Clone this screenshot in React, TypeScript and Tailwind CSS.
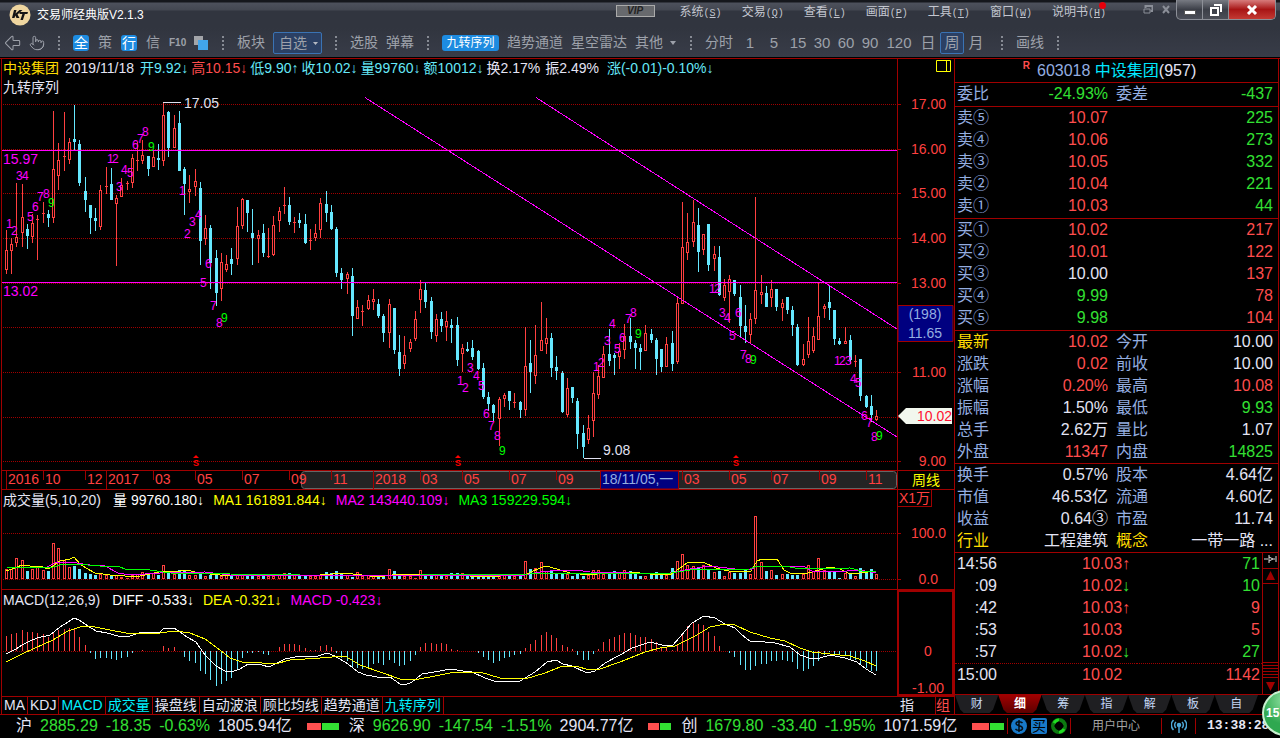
import { ArrowBigLeft, Pointer } from "lucide-react";

// high, body top, body bottom, low, up(1) / down(0) - y values in chart units
const candles = [
    [230,250,270,274,1],[238,244,251,274,1],[183,237,243,247,1],[184,217,233,247,1],[224,229,236,249,0],[214,223,237,243,1],
    [215,219,219,260,1],[202,213,213,223,1],[210,214,218,227,0],[111,169,218,223,1],[143,160,176,190,1],[112,156,156,171,1],
    [138,142,160,164,1],[105,139,142,150,0],[140,144,183,186,0],[177,191,200,212,0],[205,205,218,234,0],[208,218,221,231,0],
    [185,190,227,230,1],[167,186,186,194,1],[168,184,200,200,0],[195,198,204,266,1],[178,185,197,197,1],[181,183,183,190,1],
    [154,158,183,188,1],[142,160,160,171,1],[140,155,161,164,1],[156,156,169,176,0],[150,157,167,167,1],[144,158,160,170,0],
    [102,115,161,166,1],[111,112,148,157,0],[115,128,148,148,1],[111,123,171,171,0],[167,169,184,215,0],[175,189,192,203,1],
    [169,181,187,196,1],[182,188,241,265,0],[215,228,239,245,1],[225,228,263,289,0],[250,258,293,306,0],[253,262,289,301,1],
    [255,264,270,272,1],[248,259,264,275,0],[207,226,259,265,1],[198,199,226,229,1],[200,200,213,232,0],[209,233,238,265,0],
    [230,235,239,263,1],[224,233,253,257,0],[228,256,256,258,1],[216,225,255,256,1],[207,211,221,232,1],[187,205,205,214,1],
    [197,205,222,225,0],[217,222,222,233,1],[213,220,223,228,0],[214,224,243,244,0],[229,240,240,250,1],[224,233,238,241,1],
    [198,203,230,238,1],[191,204,213,222,0],[205,212,229,230,0],[227,229,273,277,0],[268,273,280,289,0],[272,274,279,294,1],
    [268,276,316,336,0],[300,307,319,319,1],[305,311,311,326,1],[295,300,309,310,1],[289,299,302,310,1],[299,304,316,318,0],
    [314,316,333,342,0],[299,304,333,348,1],[308,308,350,354,0],[335,352,369,376,0],[336,355,364,369,1],[339,342,349,352,1],
    [311,319,339,341,1],[280,289,300,313,1],[283,290,302,308,0],[297,301,332,339,0],[314,319,336,342,1],[312,319,326,332,0],
    [311,321,327,341,1],[319,325,328,343,0],[317,325,360,366,0],[344,348,354,372,1],[342,349,351,352,0],[340,348,357,360,0],
    [350,351,369,370,0],[363,368,397,399,0],[392,397,404,411,0],[404,405,413,421,0],[397,399,419,446,1],[393,395,399,407,1],
    [391,391,401,410,0],[393,402,402,408,1],[401,402,410,418,0],[327,366,410,416,1],[340,363,372,393,0],[325,355,376,384,1],
    [302,340,351,351,1],[318,338,344,354,1],[333,338,368,377,0],[356,367,371,380,0],[371,373,412,413,0],[378,388,415,417,1],
    [387,387,398,403,0],[398,401,434,449,0],[425,433,447,458,0],[415,428,440,444,1],[372,393,421,437,1],[365,376,395,399,1],
    [346,354,378,378,1],[329,354,361,366,0],[353,355,358,375,0],[343,351,357,369,1],[324,336,350,359,1],[318,336,342,349,0],
    [340,343,348,369,0],[344,348,352,370,0],[325,333,351,351,1],[329,334,340,343,0],[338,340,359,375,0],[349,349,367,372,0],
    [337,344,367,367,1],[331,343,364,371,0],[297,303,362,364,1],[202,247,304,304,1],[213,242,253,260,1],[200,222,242,247,1],
    [208,225,252,272,0],[234,234,250,255,1],[224,224,265,271,0],[246,254,259,271,1],[246,257,295,296,0],[279,285,298,301,1],
    [275,279,292,323,1],[280,280,294,296,0],[285,297,326,338,0],[305,326,332,343,0],[313,319,335,344,1],[197,290,319,324,1],
    [275,292,295,304,1],[286,293,307,307,0],[280,289,298,307,1],[289,289,307,311,0],[299,303,308,321,1],[297,297,310,314,0],
    [306,310,325,336,0],[324,327,365,366,0],[344,359,365,366,1],[317,341,355,358,1],[327,336,351,353,1],[283,316,340,340,1],
    [304,306,309,318,1],[286,302,308,320,0],[310,310,339,345,0],[338,341,344,345,0],[327,341,344,344,1],[335,340,360,364,0],
    [355,361,361,367,1],[359,359,396,401,0],[395,396,407,408,0],[395,406,415,422,0],[410,416,420,421,1],
];

const volumes = [
    10,10,21,19,8,10,13,9,8,36,31,19,12,13,10,6,5,4,5,4,4,4,2,1,4,5,7,5,6,4,14,8,5,9,8,4,4,6,3,4,4,3,4,3,5,4,5,4,3,4,3,3,4,6,6,
    4,4,4,3,3,4,7,6,8,6,4,2,7,3,4,3,4,4,10,8,5,3,3,1,9,5,4,4,4,3,6,6,6,4,4,4,4,4,3,5,4,3,3,3,18,10,11,17,8,9,5,6,5,3,6,3,4,9,9,
    5,5,8,6,9,8,5,3,3,5,7,5,4,11,18,25,14,13,12,14,10,7,8,3,7,6,6,10,5,63,17,8,9,4,5,5,4,4,5,14,8,21,9,7,7,1,6,5,3,11,8,10,5,
];

const macdBars = [
    636,634,633,630,632,632,633,634,637,632,630,629,628,629,637,645,653,659,658,658,659,660,658,657,653,651,650,651,651,651,646,
    648,647,651,657,661,663,671,674,680,686,684,681,678,669,658,653,653,652,654,655,651,647,644,644,644,645,648,650,650,646,645,
    647,653,658,661,667,668,669,668,664,663,665,660,663,666,665,661,655,647,643,643,644,643,644,649,650,651,651,651,653,657,660,
    663,661,658,657,655,654,648,644,640,635,632,635,638,645,647,649,655,660,660,654,649,642,639,637,635,633,633,635,637,637,639,
    642,647,647,650,644,633,626,622,624,625,632,636,646,651,653,657,665,670,670,666,664,664,661,661,660,661,662,669,671,669,666,
    661,655,652,654,655,656,659,660,664,668,671,671,
];

const ma1 = "6,571 12,569 17,567 22,565 30,566 40,566 45,568 49,569 54,565 60,561 70,559 74,557 80,564 86,568 95,573 110,575 125,576 140,576 150,574 163,571 180,571 186,570 200,573 230,576 260,574 300,576 320,575 345,573 370,576 385,576 400,574 430,575 470,576 500,576 525,575 533,571 538,569 545,566 550,567 560,570 570,573 590,575 605,573 620,572 640,573 650,574 670,575 680,568 687,563 697,562 705,563 716,568 733,572 751,571 757,561 762,559 777,559 784,570 790,573 805,574 815,571 830,567 840,569 850,574 860,573 876,571";
const ma2 = "45,568 55,563 70,562 90,565 105,566 118,573 130,575 160,573 205,572 230,575 300,575 400,575 520,576 540,572 560,570 575,570 590,572 630,573 665,574 690,569 710,566 735,569 750,570 757,566 790,566 803,566 812,571 835,572 860,570 876,573";
const ma3 = "6,567 50,568 60,565 75,564 100,566 120,567 125,569 150,570 170,573 230,574 300,575 420,575 530,574 550,573 600,573 665,574 690,570 750,569 757,566 785,566 800,569 850,568 862,571 876,572";
const diff = "6,654 16,649 22,645 30,641 37,638 50,635 60,627 68,622 74,618 79,620 88,626 96,631 107,633 118,636 130,636 142,632 160,632 163,629 174,628 180,632 187,637 196,642 205,655 216,666 225,671 231,672 240,669 248,664 262,665 269,667 285,659 300,656 315,657 327,653 335,656 348,664 358,672 366,675 383,678 390,677 400,684 405,685 412,682 422,674 440,671 450,669 463,671 472,672 485,678 497,682 520,681 535,672 547,662 556,660 563,664 572,666 587,673 595,671 605,663 620,655 632,648 650,642 662,645 672,646 680,637 692,623 704,616 715,618 725,624 735,628 742,635 750,641 765,642 775,643 790,647 800,655 812,659 820,658 830,655 845,658 857,662 866,669 876,675";
const dea = "6,662 20,655 35,648 53,640 68,631 83,626 95,627 110,630 126,633 160,633 175,631 190,633 205,639 220,650 230,658 242,662 262,663 275,664 290,660 320,658 345,656 360,665 380,672 400,679 413,680 430,677 455,672 480,672 500,678 525,679 545,673 560,667 575,666 590,670 600,669 620,662 645,652 660,648 675,646 695,636 710,627 725,624 735,625 750,632 770,638 785,641 800,648 812,652 830,654 850,656 865,661 876,666";

// nine-turn sequence counts: digit, x, baseline
const marks = [
    [1,6,228],[2,11,235],[3,16,180],[4,22,180],[5,27,221],[6,32,211],[7,37,201],[8,43,198],[9,48,207],
    [1,107,163],[2,112,163],[3,116,191],[4,121,174],[5,127,177],[6,132,149],[7,137,143],[8,142,136],[9,148,151],
    [1,179,195],[2,184,238],[3,189,226],[4,195,219],[5,200,287],[6,205,268],[7,210,310],[8,216,327],[9,221,322],
    [1,457,385],[2,462,392],[3,467,372],[4,473,380],[5,478,390],[6,483,418],[7,488,430],[8,494,440],[9,499,455],
    [1,593,371],[2,598,367],[3,604,345],[4,609,328],[5,614,353],[6,619,342],[7,625,323],[8,630,317],[9,635,338],
    [1,709,293],[2,714,293],[3,719,317],[4,724,322],[5,729,340],[6,735,317],[7,740,359],[8,745,363],[9,750,364],
    [1,834,365],[2,839,365],[3,845,365],[4,850,383],[5,855,387],[6,861,420],[7,866,427],[8,871,441],[9,876,440],
];

const gridLines = [104, 149, 193, 238, 283, 327, 372, 417, 461];
const priceLabels: [string, number][] = [["17.00", 104], ["16.00", 149], ["15.00", 193], ["14.00", 238], ["13.00", 283], ["11.00", 372], ["9.00", 461]];

const dates: [string, number][] = [
    ["2016", 6], ["10", 43], ["12", 85], ["2017", 106], ["03", 153], ["05", 195], ["07", 242], ["09", 289], ["11", 331], ["2018", 373],
    ["03", 420], ["05", 462], ["07", 509], ["09", 556], ["03", 682], ["05", 729], ["07", 771], ["09", 819], ["11", 866],
];

const R = "text-[#ff4d4d]";
const G = "text-[#33e033]";
const W = "text-[#e4e4f4]";

const sell = [["卖⑤", "10.07", "225", R, G], ["卖④", "10.06", "273", R, G], ["卖③", "10.05", "332", R, G], ["卖②", "10.04", "221", R, G], ["卖①", "10.03", "44", R, G]];
const buy = [["买①", "10.02", "217", R, R], ["买②", "10.01", "122", R, R], ["买③", "10.00", "137", W, R], ["买④", "9.99", "78", G, R], ["买⑤", "9.98", "104", G, R]];
const latest = [
    ["最新", "10.02", "今开", "10.00", R, W],
    ["涨跌", "0.02", "前收", "10.00", R, W],
    ["涨幅", "0.20%", "最高", "10.08", R, R],
    ["振幅", "1.50%", "最低", "9.93", W, G],
    ["总手", "2.62万", "量比", "1.07", W, W],
    ["外盘", "11347", "内盘", "14825", R, G],
];
const basics = [
    ["换手", "0.57%", "股本", "4.64亿", W, W],
    ["市值", "46.53亿", "流通", "4.60亿", W, W],
    ["收益", "0.64③", "市盈", "11.74", W, W],
    ["行业", "工程建筑", "概念", "一带一路 ...", W, W],
];
const ticks = [
    ["14:56", "10.03", "↑", "71", G], [":09", "10.02", "↓", "10", G], [":42", "10.03", "↑", "9", R],
    [":53", "10.03", "", "5", R], [":57", "10.02", "↓", "27", G], ["15:00", "10.02", "", "1142", R],
];

const menus = [["系统", "S"], ["交易", "Q"], ["查看", "L"], ["画面", "P"], ["工具", "T"], ["窗口", "W"], ["说明书", "H"]];
const periods = ["1", "5", "15", "30", "60", "90", "120", "日", "周", "月"];
const indicators = ["MA", "KDJ", "MACD", "成交量", "操盘线", "自动波浪", "顾比均线", "趋势通道", "九转序列"];
const indexes = [
    { name: "沪", price: "2885.29", change: "-18.35", pct: "-0.63%", amount: "1805.94亿", bar: [14, 17] },
    { name: "深", price: "9626.90", change: "-147.54", pct: "-1.51%", amount: "2904.77亿", bar: [11, 11] },
    { name: "创", price: "1679.80", change: "-33.40", pct: "-1.95%", amount: "1071.59亿", bar: [17, 14] },
];

const barX = (i: number) => 6 + Math.round(i * 5.241);

function Dots() {
    return (
        <svg width="2" height="14" className="mx-[5px] shrink-0" aria-hidden="true">
            <path d="M1 0v14" stroke="#878b94" strokeWidth="2" strokeDasharray="2 2" />
        </svg>
    );
}

function TitleBar() {
    return (
        <div className="flex h-7 items-start bg-[linear-gradient(#15171c_0,#15171c_2px,#4d515c_3px,#434751_10px,#31353f_11px)]">
            <div className="flex flex-1 items-center gap-[6px] pt-1 pl-[9px]">
                <svg width="22" height="22" viewBox="0 0 22 22" aria-label="KT">
                    <circle cx="11" cy="11" r="10.5" fill="#efd6a0" />
                    <path d="M3 14l2-8h2.500l-1 3.500L10.500 6h3L8.500 10.500l2 3.500h-3l-1.200-2.600L5.500 14zM11 8h8l-.6 2h-2.500l-2 6h-2.500l2-6h-3z" fill="#151515" />
                </svg>
                <h1 className="text-xs text-white">交易师经典版V2.1.3</h1>
            </div>
            <button className="mt-[5px] mr-[25px] h-3 w-[39px] border border-[#aaa] bg-[#67696d] text-[10px] leading-[10px] font-bold text-[#222] italic">VIP</button>
            <nav className="mr-[37px] flex gap-5 pt-1 text-xs text-[#c3c6cf]">
                {menus.map(([label, key]) => (
                    <button key={key} className="relative leading-4 whitespace-nowrap">
                        {label}<span className="font-['Liberation_Mono',monospace] text-[10px]">(<u>{key}</u>)</span>
                        {key === "H" && <span className="absolute -top-[2px] right-0 size-[7px] rounded-full bg-red-600" />}
                    </button>
                ))}
            </nav>
            <div className="mt-[5px] mr-[6px] flex gap-[9px]">
                <button aria-label="还原子窗口">
                    <svg width="10" height="9" fill="none" stroke="#8b8f98"><path d="M2.500 3V1h7v5h-2" strokeWidth="2" /><path d="M1 4h6v4H1z" /></svg>
                </button>
                <button aria-label="关闭子窗口">
                    <svg width="8" height="9" stroke="#8b8f98" strokeWidth="2"><path d="M1 1l6 7M7 1L1 8" /></svg>
                </button>
            </div>
            <div className="mr-1 flex h-5 overflow-hidden rounded-b-[5px] border border-t-0 border-[#8d9098] bg-[linear-gradient(#777a82,#3c3f48_50%,#4b4e57)]">
                <button aria-label="最小化" className="flex w-[26px] items-center justify-center border-r border-[#8d9098]">
                    <span className="mt-[5px] h-[5px] w-[12px] border border-[#555] bg-white" />
                </button>
                <button aria-label="还原" className="flex w-[26px] items-center justify-center border-r border-[#8d9098]">
                    <svg width="12" height="12" fill="none" stroke="#fff" strokeWidth="2"><path d="M4 1h7v7" /><path d="M1 4h7v7H1z" /></svg>
                </button>
                <button aria-label="关闭" className="flex w-[46px] items-center justify-center bg-[linear-gradient(#d77b7b,#a81515_50%,#c33a33)]">
                    <svg width="12" height="10" stroke="#fff" strokeWidth="3"><path d="M2 1l8 8M10 1L2 9" /></svg>
                </button>
            </div>
        </div>
    );
}

function Toolbar() {
    return (
        <div className="flex h-[29px] items-center gap-2 bg-[linear-gradient(#31353f,#383c48)] pl-[5px] text-[14px] whitespace-nowrap text-[#9da1aa]">
            <button aria-label="后退" className="-mx-[2px]"><ArrowBigLeft size={20} strokeWidth={1.250} /></button>
            <button aria-label="手形"><Pointer size={16} strokeWidth={1.500} /></button>
            <Dots />
            <button className="size-4 rounded-[3px] bg-[#1d8be0] text-[14px] leading-4 text-white">全</button>
            <button className="w-4">策</button>
            <button className="size-4 rounded-[3px] bg-[#1d8be0] text-[14px] leading-4 text-white">行</button>
            <button className="w-4">信</button>
            <button className="w-4 text-[10px] font-bold">F10</button>
            <button aria-label="叠加">
                <svg width="16" height="16"><path d="M1 1h9v9H1z" fill="#a3a5a9" /><path d="M5 5h10v10H5z" fill="#41a5ec" /></svg>
            </button>
            <Dots />
            <button>板块</button>
            <div className="relative">
                <select aria-label="自选" className="h-[22px] w-[49px] appearance-none rounded-[2px] border border-[#3a73b4] bg-[#2b4064] pl-[5px] text-[14px] leading-5">
                    <option>自选</option>
                </select>
                <svg width="5" height="3" className="pointer-events-none absolute top-[10px] right-[4px]"><path d="M0 0h5L2.500 3z" fill="#b5b9c2" /></svg>
            </div>
            <Dots />
            <button>选股</button>
            <button>弹幕</button>
            <Dots />
            <button className="h-4 w-[57px] rounded-[3px] bg-[#1d8be0] text-xs leading-4 text-white">九转序列</button>
            <button>趋势通道</button>
            <button>星空雷达</button>
            <button className="flex items-center gap-[6px]">其他<svg width="8" height="4"><path d="M1 0h6L4 4z" fill="#9da1aa" /></svg></button>
            <Dots />
            <div className="flex items-center">
                <button className="mr-[5px]">分时</button>
                {periods.map((p) => (
                    <button key={p} className={`${p === "120" ? "w-[34px]" : "w-6"} ${p === "周" ? "h-[22px] rounded-[2px] border border-[#3a73b4] bg-[#2b4064]" : ""} text-[15px] leading-5`}>{p}</button>
                ))}
            </div>
            <Dots />
            <button>画线</button>
            <Dots />
        </div>
    );
}

function Candle({ x, c }: { x: number; c: number[] }) {
    const [high, top, bottom, low, up] = c;
    const color = up ? "#ff4040" : "#66e8ff";
    const flat = bottom - top < 2;
    return (
        <g>
            <rect x={x} y={high} width="1" height={low - high} fill={color} />
            {up && !flat
                ? <rect x={x - 0.5} y={top + 0.5} width="2" height={bottom - top - 1} fill="#000" stroke={color} />
                : <rect x={x - 1} y={top} width="3" height={Math.max(1, bottom - top)} fill={color} />}
        </g>
    );
}

function PriceChart() {
    return (
        <svg viewBox="2 96 895 374" preserveAspectRatio="none" className="block h-[374px] w-full text-[14px]" role="img" aria-label="周线">
            <g shapeRendering="crispEdges">
                {gridLines.map((y) => <path key={y} d={`M3 ${y + 0.5}H897`} stroke="#a00000" strokeDasharray="1 1" />)}
                {candles.map((c, i) => <Candle key={i} x={barX(i)} c={c} />)}
                <path d="M2 150.500H897M2 282.500H897M365 97.500L897 437M536 97.500L897 329" stroke="#ff00ff" fill="none" />
                <path d="M163 102.500H181M584 458.500H601" stroke="#e0e0f0" />
            </g>
            <g fill="#ff00ff">
                <text x="3" y="164">15.97</text>
                <text x="3" y="296">13.02</text>
            </g>
            <g fill="#e0e0f0">
                <text x="184" y="108">17.05</text>
                <text x="603" y="455">9.08</text>
            </g>
            <g fontSize="12">
                {marks.map(([n, x, y]) => <text key={`${x}-${y}`} x={x} y={y} fill={n === 9 ? "#00ff00" : "#ff00ff"}>{n}</text>)}
            </g>
            {[196, 458, 736].map((x) => (
                <g key={x} fill="#ff0000">
                    <path d={`M${x - 3} 458h6l-3-3z`} />
                    <text x={x - 3} y="466" fontSize="9" fontWeight="bold">S</text>
                </g>
            ))}
        </svg>
    );
}

function PriceAxis() {
    return (
        <svg viewBox="898 59 56 411" className="block h-[411px] w-full text-[14px]" fill="#ff4040">
            <path d="M936.500 60.500h14v11h-14zM946.500 60.500v11" stroke="#ffff00" fill="none" />
            {gridLines.map((y) => <path key={y} d={`M898 ${y + 0.5}h3`} stroke="#a00000" />)}
            {priceLabels.map(([t, y]) => <text key={t} x="946" y={y + 5} textAnchor="end">{t}</text>)}
            <path d="M898 305.500h55v36h-55z" fill="#000080" stroke="#a00000" />
            <g fill="#94aee0" textAnchor="middle">
                <text x="925" y="319">(198)</text>
                <text x="925" y="338">11.65</text>
            </g>
            <path d="M898 416l8-8h46v16h-46z" fill="#f2f7ee" />
            <text x="952" y="421" textAnchor="end" fill="#ff1030">10.02</text>
        </svg>
    );
}

function DateAxis() {
    return (
        <svg viewBox="2 471 895 18" preserveAspectRatio="none" className="block h-[18px] w-full text-[14px]" fill="#ff4040">
            <rect x="301.500" y="471.500" width="595" height="17" rx="3" fill="#242424" stroke="#666" />
            {dates.map(([t, x]) => (
                <g key={x}>
                    <path d={`M${x + 0.5} 471v${t.length > 2 ? 18 : 9}`} stroke="#a00000" />
                    <text x={x + 2} y="484">{t}</text>
                </g>
            ))}
            <path d="M600.500 471h78v18h-78z" fill="#000080" stroke="#a00000" />
            <text x="602" y="484" fill="#94aee0">18/11/05,一</text>
        </svg>
    );
}

function VolumeChart() {
    return (
        <svg viewBox="2 510 895 79" preserveAspectRatio="none" className="block h-[79px] w-full" shapeRendering="crispEdges" role="img" aria-label="成交量" fill="none">
            <path d="M3 533.500H897M3 579.500H897" stroke="#a00000" strokeDasharray="1 1" />
            {volumes.map((v, i) => <Candle key={i} x={barX(i)} c={[579, 579 - v, 579, 579, candles[i][4]]} />)}
            <polyline points={ma1} stroke="#ffff00" />
            <polyline points={ma2} stroke="#ff00ff" />
            <polyline points={ma3} stroke="#00ff00" />
        </svg>
    );
}

function MacdChart() {
    return (
        <svg viewBox="2 610 895 86" preserveAspectRatio="none" className="block h-[86px] w-full" shapeRendering="crispEdges" role="img" aria-label="MACD" fill="none">
            <path d="M3 651.500H897" stroke="#a00000" strokeDasharray="1 1" />
            {macdBars.map((y, i) => (
                <rect key={i} x={barX(i)} y={Math.min(y, 651)} width="1" height={Math.abs(y - 651)} fill={y < 651 ? "#ff4040" : "#66e8ff"} />
            ))}
            <polyline points={diff} stroke="#ffffff" />
            <polyline points={dea} stroke="#ffff00" />
        </svg>
    );
}

function ChartPanel() {
    return (
        <section className="ml-px min-w-0 flex-1 border-l border-[#a00000] text-[14px]">
            <div className="flex">
                <div className="min-w-0 flex-1">
                    <div className="flex h-[19px] items-center gap-[3px] pl-px whitespace-nowrap text-[#66e8f8]">
                        <span className="text-[#ffdc00]">中设集团</span>
                        <span className={`mx-[3px] ${W}`}>2019/11/18</span>
                        <span>开9.92↓</span>
                        <span className={R}>高10.15↓</span>
                        <span>低9.90↑</span>
                        <span>收10.02↓</span>
                        <span>量99760↓</span>
                        <span>额10012↓</span>
                        <span className={W}>换2.17%</span>
                        <span className={`mx-[2px] ${W}`}>振2.49%</span>
                        <span className="ml-[3px]">涨(-0.01)-0.10%↓</span>
                    </div>
                    <div className={`h-[18px] pl-px leading-[18px] ${W}`}>九转序列</div>
                    <PriceChart />
                </div>
                <div className="w-[57px] border-l border-[#a00000]"><PriceAxis /></div>
            </div>

            <div className="flex border-y border-[#a00000]">
                <div className="min-w-0 flex-1"><DateAxis /></div>
                <button className="h-[18px] w-[57px] border-l border-[#a00000] text-center leading-[18px] text-[#ffff00]">周线</button>
            </div>

            <div className="flex border-b border-[#a00000]">
                <div className="min-w-0 flex-1">
                    <div className="flex h-5 items-center gap-[9px] pl-px whitespace-nowrap">
                        <span className={`mr-[3px] ${W}`}>成交量(5,10,20)</span>
                        <span className="text-white">量 99760.180↓</span>
                        <span className="text-[#ffff00]">MA1 161891.844↓</span>
                        <span className="text-[#ff00ff]">MA2 143440.109↓</span>
                        <span className="text-[#00ff00]">MA3 159229.594↓</span>
                    </div>
                    <VolumeChart />
                </div>
                <div className="w-[57px] border-l border-[#a00000] text-[#ff4040]">
                    <div className="h-[17px] w-[34px] border-r border-b border-[#a00000] text-center leading-4">X1万</div>
                    <svg viewBox="898 507 56 82" className="block h-[82px] w-full" fill="#ff4040">
                        <path d="M898 533.500h3M898 579.500h3" stroke="#a00000" />
                        <text x="946" y="538" textAnchor="end">100.0</text>
                        <text x="938" y="584" textAnchor="end">0.0</text>
                    </svg>
                </div>
            </div>

            <div className="flex border-b border-[#a00000]">
                <div className="min-w-0 flex-1">
                    <div className="flex h-5 items-center gap-[9px] pl-px whitespace-nowrap">
                        <span className={`mr-[3px] ${W}`}>MACD(12,26,9)</span>
                        <span className="text-white">DIFF -0.533↓</span>
                        <span className="text-[#ffff00]">DEA -0.321↓</span>
                        <span className="text-[#ff00ff]">MACD -0.423↓</span>
                    </div>
                    <MacdChart />
                </div>
                <svg viewBox="897 590 57 106" className="block h-[106px] w-[57px]" fill="#ff4040">
                    <path d="M898 591h55v104h-55z" fill="none" stroke="#a00000" strokeWidth="2" />
                    <text x="928" y="656" textAnchor="middle">0</text>
                    <text x="944" y="693" textAnchor="end">-1.00</text>
                </svg>
            </div>

            <div className="flex h-[17px] leading-[17px] whitespace-nowrap">
                <div className="flex flex-1">
                    {indicators.map((t) => (
                        <button key={t} className={`border-r border-[#a00000] px-[2px] ${["MACD", "成交量", "九转序列"].includes(t) ? "text-[#00f0ff]" : W}`}>{t}</button>
                    ))}
                </div>
                <div className="flex w-[57px] justify-between pl-[3px]">
                    <button className={W}>指</button>
                    <button className={`border-l border-[#a00000] pr-[4px] ${R}`}>组</button>
                </div>
            </div>
        </section>
    );
}

function OrderBook({ rows }: { rows: string[][] }) {
    return (
        <table className="mb-px w-full table-fixed border-t border-[#a00000] text-right">
            <tbody>
                {rows.map(([label, price, vol, pc, vc]) => (
                    <tr key={label} className="h-[22px] leading-[22px]">
                        <th className="w-[40px] pl-[2px] text-left font-normal whitespace-nowrap text-[#94aee0]">{label}</th>
                        <td className={`w-[113px] ${pc}`}>{price}</td>
                        <td className={`pr-[5px] ${vc}`}>{vol}</td>
                    </tr>
                ))}
            </tbody>
        </table>
    );
}

function Quotes({ rows }: { rows: string[][] }) {
    return (
        <table className="w-full table-fixed border-t border-[#a00000] text-right">
            <tbody>
                {rows.map(([l1, v1, l2, v2, c1, c2]) => {
                    const hot = l1 === "行业";
                    return (
                        <tr key={l1} className="h-[22px] leading-[22px] whitespace-nowrap">
                            <th className={`w-[40px] pl-[2px] text-left font-normal ${hot || l1 === "最新" ? "text-[#ffdc00]" : "text-[#94aee0]"}`}>{l1}</th>
                            <td className={`w-[113px] ${c1}`}>{v1}</td>
                            <th className={`w-[48px] pl-2 text-left font-normal ${hot ? "text-[#ffdc00]" : "text-[#94aee0]"}`}>{l2}</th>
                            <td className={`pr-[5px] ${c2}`}>{v2}</td>
                        </tr>
                    );
                })}
            </tbody>
        </table>
    );
}

function SidePanel() {
    return (
        <aside className="mr-px flex w-[325px] shrink-0 flex-col border-x border-[#a00000] text-[16px]">
            <h2 className="flex h-[23px] items-center justify-center pr-[14px] text-[#94aee0]">
                <span className="mr-[7px] self-start text-[10px] leading-[14px] font-bold text-[#ff4d4d]">R</span>
                603018&nbsp;<span className="text-[#00e8ff]">中设集团</span><span className={W}>(957)</span>
            </h2>
            <table className="w-full table-fixed border-t border-[#a00000] text-right">
                <tbody>
                    <tr className="h-[23px] leading-[22px]">
                        <th className="w-[40px] pl-[2px] text-left font-normal text-[#94aee0]">委比</th>
                        <td className={`w-[113px] ${G}`}>-24.93%</td>
                        <th className="w-[48px] pl-2 text-left font-normal text-[#94aee0]">委差</th>
                        <td className={`pr-[5px] ${G}`}>-437</td>
                    </tr>
                </tbody>
            </table>
            <OrderBook rows={sell} />
            <OrderBook rows={buy} />
            <Quotes rows={latest} />
            <Quotes rows={basics} />
            <div className="flex flex-1 border-y border-[#a00000]">
                <div className="flex-1">
                    <table className="w-full table-fixed">
                        <tbody>
                            {ticks.map(([time, price, arrow, vol, vc]) => (
                                <tr key={time} className={`h-[22px] leading-[22px] ${time === "15:00" ? "border-t border-dotted border-[#a00000]" : ""}`}>
                                    <td className={`w-[42px] text-right ${W}`}>{time}</td>
                                    <td className="w-[140px] pl-[85px] whitespace-nowrap text-[#ff4d4d]">{price}<span className={arrow === "↓" ? G : ""}>{arrow}</span></td>
                                    <td className={`pr-[2px] text-right ${vc}`}>{vol}</td>
                                </tr>
                            ))}
                        </tbody>
                    </table>
                </div>
                <div className="flex w-4 flex-col border-l border-[#a00000]">
                    <button aria-label="固定" className="flex h-[15px] items-start justify-center">
                        <svg width="13" height="10"><path d="M0 6h4M5 2v8M5 4l4 2-4 2M9 6h2M12 3v6" stroke="#ddd" fill="none" /></svg>
                    </button>
                    <button aria-label="向上" className="flex h-4 items-center justify-center border-y border-[#a00000]">
                        <svg width="9" height="9"><path d="M0 9h9L4.500 0z" fill="#a00000" /></svg>
                    </button>
                    <div className="flex flex-1 items-end">
                        <div className="h-[17px] w-full bg-[repeating-linear-gradient(#a00000_0_1px,#000_1px_3px)]" />
                    </div>
                    <button aria-label="向下" className="flex h-[15px] items-center justify-center">
                        <svg width="9" height="9"><path d="M0 0h9L4.500 9z" fill="#a00000" /></svg>
                    </button>
                </div>
            </div>
            <div className="flex h-[19px] items-start pr-[20px] text-xs">
                {["财", "细", "筹", "指", "解", "板", "自"].map((t) => (
                    <button key={t} className={`h-[18px] flex-1 leading-[18px] [clip-path:polygon(0_0,100%_0,88%_80%,80%_100%,20%_100%,12%_80%)] ${t === "细" ? "bg-[linear-gradient(#a00000,#5c0000)] font-bold text-white" : "bg-[#1f1f22] text-[#c4d6f4]"}`}>{t}</button>
                ))}
            </div>
        </aside>
    );
}

function StatusBar() {
    return (
        <footer className="flex h-[23px] items-center border-t border-[#a00000] pl-4 text-[16px] whitespace-nowrap">
            <div className="flex flex-1 items-center gap-2">
                {indexes.map((ix) => (
                    <div key={ix.name} className="flex items-center gap-2">
                        <span className={W}>{ix.name}</span>
                        <span className={G}>{ix.price}</span>
                        <span className={G}>{ix.change}</span>
                        <span className={G}>{ix.pct}</span>
                        <span className={W}>{ix.amount}</span>
                        <span className="mr-[2px] ml-[7px] flex gap-px">
                            <span className="h-[7px] bg-[#ff5050]" style={{ width: ix.bar[0] }} />
                            <span className="h-[7px] bg-[#33e033]" style={{ width: ix.bar[1] }} />
                        </span>
                    </div>
                ))}
            </div>
            <div className="flex h-4 items-center gap-1 border-x border-[#a00000] px-[3px]">
                <button aria-label="资金">
                    <svg width="16" height="16" fill="none"><circle cx="8" cy="8" r="8" fill="#1879c8" /><path d="M11.500 5C10 3 5 3.200 5 5.600c0 2.600 6.500 1.800 6.500 4.600C11.500 13 6 13 4.500 10.800M8 2v12" stroke="#051018" strokeWidth="1.500" /></svg>
                </button>
                <button className="size-4 rounded-[2px] bg-[#1879c8] text-[14px] leading-4 text-black">买</button>
                <button aria-label="循环">
                    <svg width="16" height="16" fill="none"><circle cx="8" cy="8" r="6" stroke="#0c7a10" strokeWidth="4" /><path d="M3 5a6 6 0 0 1 5-3M13 11a6 6 0 0 1-5 3" stroke="#22dd22" strokeWidth="3" /><path d="M8 3l5 5-5 5-5-5z" fill="#000" /></svg>
                </button>
            </div>
            <button className="w-[90px] text-xs text-[#a5a5a5]">用户中心</button>
            <button aria-label="信号" className="flex h-4 w-[35px] items-center justify-center border-x border-[#a00000]">
                <svg width="16" height="14" fill="none" stroke="#4da8d8" strokeWidth="1.500"><circle cx="8" cy="6" r="1.500" fill="#4da8d8" /><path d="M8 7v7M5 3a4 4 0 0 0 0 6M11 3a4 4 0 0 1 0 6M2.500 1a7 7 0 0 0 0 10M13.500 1a7 7 0 0 1 0 10" /></svg>
            </button>
            <time className="w-[84px] overflow-hidden pl-[11px] font-['Liberation_Mono',monospace] text-[13px] font-bold text-[#e8e8f4]">13:38:28</time>
        </footer>
    );
}

export default function App() {
    return (
        <div className="relative flex min-h-screen flex-col overflow-hidden bg-black font-['Liberation_Sans','Noto_Sans_CJK_SC',sans-serif]">
            <header className="border-b border-black">
                <TitleBar />
                <Toolbar />
            </header>
            <main className="flex border-t border-[#a00000]">
                <ChartPanel />
                <SidePanel />
            </main>
            <StatusBar />
            <button className="absolute -right-7 bottom-[2px] size-[46px] rounded-full border-2 border-[#c8f0d0] bg-[radial-gradient(circle_at_50%_20%,#8fe0a0,#2fa850_60%)] pl-[2px] text-left text-xs font-bold text-white">15</button>
        </div>
    );
}
